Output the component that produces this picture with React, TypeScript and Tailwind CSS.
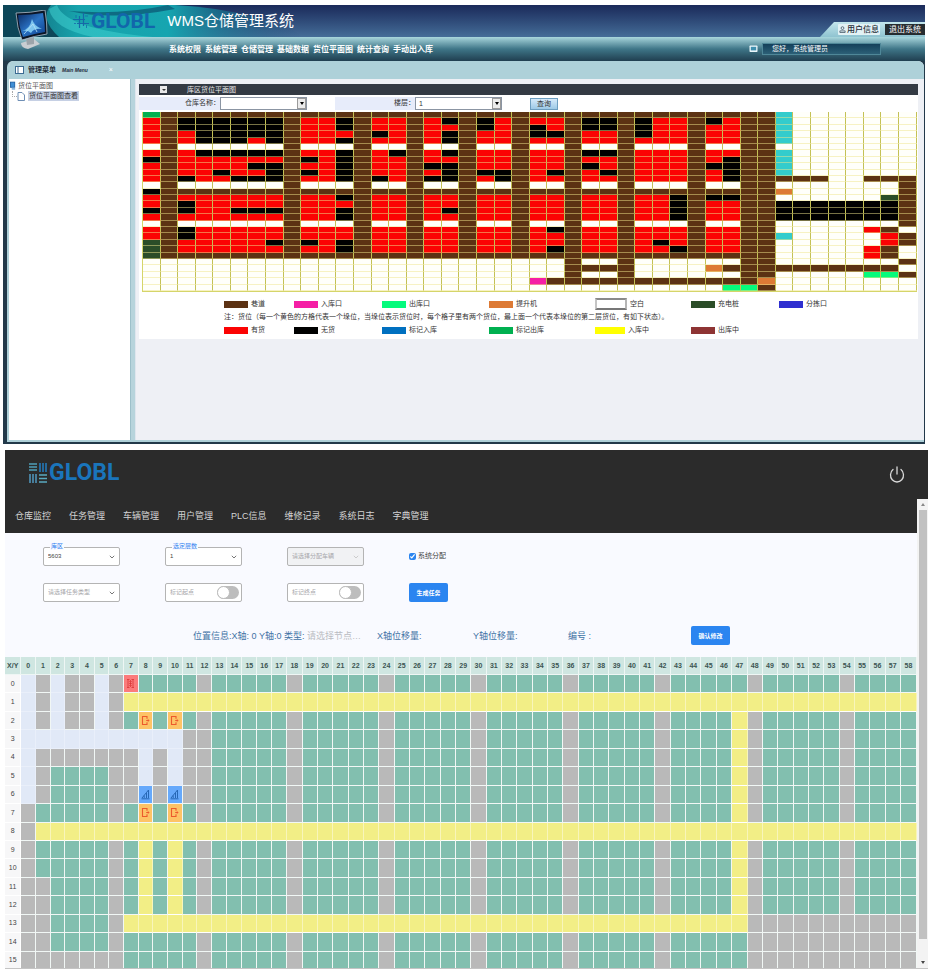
import React from "react";

const CJK = "font-['Liberation_Sans','Noto_Sans_CJK_SC',sans-serif]";

/* ---------- Storage plan: one string per column, top to bottom ---------- */

const rack = (a: string, b: string, c: string, d: string, tail = ".....") =>
  `B${a}.${b}.B${c}.${d}B${tail}`;
const aisle = (tail = ".....") => "B".repeat(23) + tail;
const R4 = "RRRR";
const R5 = "RRRRR";

const PLAN_COLUMNS: string[] = [
  "GRRRR.RKRRR.KRRKR.RRCCC.....",
  aisle(),
  rack("KKRR", "RRRRK", "RKKR", "KKRR"),
  rack("KKKK", "KRRRR", R4, R4),
  rack("KKKK", "KRRKR", R4, R4),
  rack("KKKK", "KRRRK", "RRKR", R4),
  rack("KKKR", "KRKRK", "RRKR", R4),
  rack("KKKK", "KRKKK", "RRKR", "RRKR"),
  aisle(),
  rack(R4, "RKRKR", R4, "RRKR"),
  rack(R4, R5, R4, R4),
  rack("KKRK", "KKKKK", "KRKK", "RRKK"),
  aisle(),
  rack("RRKR", "RRRRK", R4, R4),
  rack(R4, "KRRRR", R4, R4),
  aisle(),
  rack(R4, "RRKRK", R4, R4),
  rack("KRKK", "KRKKK", "RRKR", R4),
  aisle(),
  rack("KKRR", "RRRKR", R4, R4),
  rack(R4, "RRRKK", R4, R4),
  aisle(),
  rack("RKKR", R5, R4, R4, "...P."),
  rack("RRKR", "RRRKR", R4, "KRRK", "...B."),
  aisle("BBBB."),
  rack("KKRR", "KRKRR", R4, R4, ".B.B."),
  rack("KKRR", "KRRKR", R4, R4, ".B.B."),
  aisle("BBBB."),
  rack("KKKR", R5, R4, R4, "...B."),
  rack(R4, R5, R4, "RRKR", "...B."),
  rack(R4, R5, "KKKK", "RRRK", "...B."),
  aisle("...B."),
  rack("KRRR", "RRKRR", "KRRR", R4, ".O.B."),
  rack(R4, "RKKKK", "KRRR", R4, ".B.BS"),
  aisle("BBBBS"),
  aisle("BBBOB"),
  "TTTTT.TTTTB.O.KKK..T....B...",
  "..........B...KKK.......B...",
  "..........B...KKK.......B...",
  "..............KKK.......B...",
  "..............KKK.......B...",
  "..........B...KKK.R..RR.BS..",
  "..........B..CKKK.BRRBB.BS..",
  "..........BBBBBBBB.BB..B.B..",
];

const PLAN_FILL: Record<string, string> = {
  ".": "bg-[#fffffa]",
  B: "bg-[#5c3213]",
  R: "bg-[#fb0303]",
  K: "bg-black",
  G: "bg-[#00b050]",
  C: "bg-[#2b4d28]",
  T: "bg-[#33cccc]",
  O: "bg-[#dd7a35]",
  P: "bg-[#f51fa5]",
  S: "bg-[#05fb7c]",
};

function StoragePlan() {
  return (
    <table className="h-[180px] w-full table-fixed border-separate border-spacing-0 border-b border-l border-[#d5d56a]">
      <tbody>
        {Array.from({ length: 28 }, (_, r) => (
          <tr key={r}>
            {PLAN_COLUMNS.map((col, c) => (
              <td key={c} className={`border-r border-b border-r-[#c4c155] border-b-[#f0e68c80] p-0 ${PLAN_FILL[col[r]]}`} />
            ))}
          </tr>
        ))}
      </tbody>
    </table>
  );
}

const LEGEND_TYPES = [
  ["巷道", "bg-[#5c3213]"],
  ["入库口", "bg-[#f51fa5]"],
  ["出库口", "bg-[#05fb7c]"],
  ["提升机", "bg-[#dd7a35]"],
  ["空白", ""],
  ["充电桩", "bg-[#2b4d28]"],
  ["分拣口", "bg-[#2f2fd0]"],
];
const LEGEND_STATES = [
  ["有货", "bg-[#fb0303]"],
  ["无货", "bg-black"],
  ["标记入库", "bg-[#0070c0]"],
  ["标记出库", "bg-[#00b050]"],
  ["入库中", "bg-[#ffff00]"],
  ["出库中", "bg-[#8e3434]"],
];

function LegendRow({ items }: { items: string[][] }) {
  return (
    <ul className="grid h-3 grid-cols-[70fr_88fr_107fr_106fr_96fr_88fr_138fr] items-center">
      {items.map(([name, fill]) => (
        <li key={name} className="flex items-center gap-[3px] whitespace-nowrap">
          {fill ? (
            <span className={`h-[7px] ${name === "入库中" ? "w-[30px]" : "w-6"} ${fill}`} />
          ) : (
            <span className="h-3 w-8 border-2 border-t-[#8a8a8a] border-r-[#b5b5b5] border-b-[#777] border-l-[#c5c5c5] bg-white" />
          )}
          {name}
        </li>
      ))}
    </ul>
  );
}

function MonitorIcon() {
  return (
    <svg viewBox="0 0 34 40" className="absolute top-[5px] left-[11px] z-10 h-10 w-[34px]" aria-hidden="true">
      <defs>
        <linearGradient id="screen" x1="0" y1="0" x2="1" y2="1">
          <stop offset="0" stopColor="#0b2b63" />
          <stop offset="0.5" stopColor="#2a72c4" />
          <stop offset="1" stopColor="#0c3f8c" />
        </linearGradient>
      </defs>
      <path d="M7 33 L20 29 L26 34 L14 39 Q7 38 7 33Z" fill="#c9ced2" />
      <path d="M12 28 L20 27 L20 34 L13 35Z" fill="#9ca4aa" />
      <path d="M2 3 Q16 3 31 0 Q33 12 33 24 Q20 26 8 30 Q3 18 2 3Z" fill="#0b1526" stroke="#aebdca" strokeWidth="0.8" />
      <path d="M4 5 Q17 5 29 3 Q31 13 31 22 Q19 24 9 27 Q5 17 4 5Z" fill="url(#screen)" />
      <path d="M8 21 Q16 19 18 9 Q20 16 28 19 Q20 18 17 23 Q14 20 8 21Z" fill="#7cc4ee" />
      <path d="M10 24 L19 14 L23 22" stroke="#b9e3f7" strokeWidth="0.8" fill="none" />
    </svg>
  );
}

function HeaderSwoosh() {
  return (
    <svg viewBox="0 0 300 32" className="absolute top-0 left-0 h-8 w-[300px]" aria-hidden="true">
      <defs>
        <linearGradient id="teal" x1="0" x2="1">
          <stop offset="0" stopColor="#0f5b6e" />
          <stop offset="0.25" stopColor="#17a3ac" />
          <stop offset="0.55" stopColor="#16a5b0" />
          <stop offset="1" stopColor="#1c4f78" stopOpacity="0" />
        </linearGradient>
      </defs>
      <path d="M0 0 H172 Q215 2 260 14 Q288 22 300 32 H0Z" fill="url(#teal)" />
      <path d="M0 0 H48 Q36 14 56 32 H0Z" fill="#0d4658" />
      <path d="M54 0 Q62 24 150 32 H90 Q50 24 46 4Z" fill="#3fd0cf" opacity="0.55" />
      <path d="M165 0 Q120 10 66 6 Q110 16 172 4Z" fill="#0c5d78" opacity="0.8" />
    </svg>
  );
}

function CrossMark() {
  return (
    <svg viewBox="0 0 18 18" className="h-[18px] w-[18px]" stroke="#1668a8" fill="none" aria-hidden="true">
      <path d="M7.5 4V16M11.5 1V14M1 7.5H13M5 11.5H17" strokeWidth="1.2" />
      <path d="M4 3V6M14.5 13V16M2 11.5H4M13 4H16" strokeWidth="0.8" />
    </svg>
  );
}

function WeaveMark() {
  return (
    <svg viewBox="0 0 20 22" className="h-[22px] w-5" strokeWidth="1.6" fill="none" aria-hidden="true">
      <path d="M1 2H9M1 5H9M1 8H9" stroke="#4f9fb8" />
      <path d="M12 1V10M15 1V10M18 1V10" stroke="#2478b8" />
      <path d="M2 12V21M5 12V21M8 12V21" stroke="#4f93b8" />
      <path d="M11 13H19M11 16.5H19M11 20H19" stroke="#5aa9c0" />
    </svg>
  );
}

const WMS_MENU = ["系统权限", "系统管理", "仓储管理", "基础数据", "货位平面图", "统计查询", "手动出入库"];

function BoxSelect({ id, value }: { id: string; value: string }) {
  return (
    <span className="relative flex">
      <select id={id} className="block h-[13px] w-[87px] appearance-none border border-[#8b95a3] bg-white pl-[3px] text-[7px] leading-[10px] text-[#333]">
        <option>{value}</option>
      </select>
      <span className="pointer-events-none absolute inset-y-px right-px flex w-[9px] items-center justify-center border border-[#9a9a9a] bg-[#ececec]">
        <span className="border-x-[2px] border-t-[3px] border-x-transparent border-t-black" />
      </span>
    </span>
  );
}

function WmsHeader() {
  return (
    <header className="relative overflow-hidden">
      <div className="relative h-8 bg-linear-to-b from-[#1b2a5a] to-[#456d98]">
        <HeaderSwoosh />
        <div className="relative flex h-full items-center pl-[69px]">
          <CrossMark />
          <span className="ml-px font-['Roboto',sans-serif] text-[21px] leading-6 font-bold text-[#1266ab]">GLOBL</span>
          <h1 className="ml-3 text-[15px] leading-6 text-white">WMS仓储管理系统</h1>
          <div className="ml-auto flex h-[15px] items-center gap-[5px] self-end bg-linear-to-b from-[#c3e6ec] to-[#8fc3d0] pl-[18px] [clip-path:polygon(14px_0,100%_0,100%_100%,0_100%)]">
            <button className="flex h-[11px] items-center gap-px rounded-[1px] bg-[#e3f2f5] px-px text-[8px] leading-[10px] font-medium text-[#26303a]">
              <svg viewBox="0 0 8 8" className="h-[7px] w-[7px]" fill="none" stroke="#456" strokeWidth="0.9">
                <circle cx="4" cy="2.4" r="1.6" />
                <path d="M1 7.4V5.6H7V7.4Z" />
              </svg>
              用户信息
            </button>
            <button className="h-[11px] bg-[#252c30] px-[4px] text-[8px] leading-[10px] text-white">退出系统</button>
          </div>
        </div>
      </div>
      <div className="flex h-6 items-center bg-linear-to-b from-[#a9d7dd] via-[#3f7688] to-[#203f50] pr-11 pl-[166px]">
        <nav className="flex gap-1 pt-0.5 text-[8px] leading-3 font-bold whitespace-nowrap text-white">
          {WMS_MENU.map((m) => (
            <a key={m} href="#">{m}</a>
          ))}
        </nav>
        <svg viewBox="0 0 9 8" className="ml-auto h-2 w-[9px]" aria-hidden="true">
          <rect x="0.5" y="0.5" width="8" height="6.5" rx="0.8" fill="#eaf6fa" />
          <rect x="1.8" y="1.8" width="5.4" height="3.6" fill="#3f8fae" />
        </svg>
        <p className="ml-1 h-3 w-[119px] border border-[#4f8798] bg-linear-to-b from-[#14405a] to-[#2c6077] pl-[9px] text-[7px] leading-[10px] text-white">
          您好，系统管理员
        </p>
      </div>
      <MonitorIcon />
    </header>
  );
}

function WmsWindow() {
  return (
    <section className="mr-[5px] ml-[3px] bg-[#22394a] pb-0.5">
      <WmsHeader />
      <div className="mr-px ml-1 overflow-hidden rounded-t-md border-b-2 border-l-2 border-[#aed0d8] bg-[#eef0f5]">
        <div className="flex h-[18px] items-center bg-[#aed1d9] pl-1.5 text-[7px] leading-3 text-[#1f2d3a]">
          <svg viewBox="0 0 9 8" className="h-2 w-[9px]" aria-hidden="true">
            <rect x="0.5" y="0.5" width="8" height="7" fill="#fff" stroke="#3b6b93" />
            <path d="M3 0.5V7.5" stroke="#3b6b93" />
          </svg>
          <h2 className="ml-1 font-bold">管理菜单</h2>
          <span className="ml-1.5 text-[5px] font-bold italic">Main Menu</span>
          <button className="ml-[21px] text-[7px] text-white" aria-label="关闭">×</button>
        </div>
        <div className="flex min-h-[361px]">
          <aside className="w-[122px] shrink-0 border-r border-[#9dc0ca] bg-white text-[7px] leading-[10px] text-[#555]">
            <ul className="pt-0.5">
              <li className="flex items-center gap-0.5 pl-px">
                <svg viewBox="0 0 7 10" className="h-[10px] w-[6px]" aria-hidden="true">
                  <rect x="0.5" y="0.5" width="5" height="6" fill="#3f8fd6" stroke="#1d5da0" />
                  <path d="M2 7H6V9.5H2Z" fill="#8ab6dd" />
                </svg>
                <a href="#">货位平面图</a>
              </li>
              <li className="flex items-center pl-[3px]">
                <span className="mb-1 h-1.5 w-[5px] border-b border-l border-dotted border-[#aaa]" />
                <svg viewBox="0 0 8 9" className="h-[9px] w-2" fill="#fff" stroke="#6f8fb5" aria-hidden="true">
                  <path d="M1 0.5H5L7.5 3V8.5H1Z" />
                </svg>
                <a href="#" className="ml-[3px] bg-[#c6d0e4] px-px text-[#333]">货位平面图查看</a>
              </li>
            </ul>
          </aside>
          <div className="w-[5px] shrink-0 border-r border-[#dfe6ee] bg-[#b7d4dc]" />
          <main className="mr-1.5 ml-[3px] min-w-0 flex-1 pt-[5px] text-[7px] leading-[10px] text-[#333]">
            <div className="flex h-[11px] items-center bg-[#333a43] pl-[21px] text-[#e8e8e8]">
              <span className="flex h-[7px] w-[7px] items-center justify-center bg-[#e8e8e8]">
                <span className="border-x-[2px] border-t-[2px] border-x-transparent border-t-[#333]" />
              </span>
              <h3 className="ml-5">库区货位平面图</h3>
            </div>
            <form className="flex h-[17px] items-center bg-white" onSubmit={(e) => e.preventDefault()}>
              <label htmlFor="warehouse" className="h-[13px] w-[81px] bg-[#e7ecfa] pt-px text-right">仓库名称：</label>
              <BoxSelect id="warehouse" value="" />
              <label htmlFor="floor" className="ml-7 h-[13px] w-20 bg-[#e7ecfa] pt-px text-right">楼层：</label>
              <BoxSelect id="floor" value="1" />
              <button className="ml-7 h-3 w-7 border border-[#6d9ec0] bg-linear-to-b from-[#d5eafa] to-[#9dc9e6] leading-[10px]">查询</button>
            </form>
            <div className="bg-white pr-px pb-[3px] pl-[3px]">
              <StoragePlan />
              <div className="pt-1.5 pl-[82px]">
                <LegendRow items={LEGEND_TYPES} />
                <p className="my-0.5 whitespace-nowrap">
                  注：货位（每一个黄色的方格代表一个垛位，当垛位表示货位时，每个格子里有两个货位，最上面一个代表本垛位的第二层货位，有如下状态）。
                </p>
                <LegendRow items={LEGEND_STATES} />
              </div>
            </div>
          </main>
        </div>
      </div>
    </section>
  );
}

/* ---------- Warehouse control page ---------- */

const CONTROL_MENU = ["仓库监控", "任务管理", "车辆管理", "用户管理", "PLC信息", "维修记录", "系统日志", "字典管理"];

/* First twelve columns of every row; the others follow a regular pattern. */
const MAP_LEFT = [
  "LXLXXLXRGGGG",
  "LXLXXLXYYYYY",
  "LXLXXLXGOGOG",
  "LLLLLLLLLLLX",
  "LXXXXXXXLXLX",
  "LXGGGGXXLXLX",
  "LXGGGGXXUXUX",
  "XGGGGGXGOGOG",
  "XYYYYYYYYYYY",
  "XGGGGGXGYGYG",
  "XGGGGGXGYGYG",
  "XXGGGGXGYGYG",
  "XXGGGGXGYGYG",
  "XXGGGGXYYYYY",
  "XXGGGGXGGGGG",
  "XXXXXXXGGGGG",
];

function mapCell(r: number, c: number): string {
  if (c < 12) return MAP_LEFT[r][c];
  if (r === 1 || r === 8) return "Y";
  if (r >= 13 && c >= 48) return "X";
  if (r === 13) return "Y";
  if (c === 47 && r >= 2 && r <= 12) return "Y";
  return c % 6 === 0 ? "X" : "G";
}

const MAP_FILL: Record<string, string> = {
  L: "bg-[#e1e9f7]",
  X: "bg-[#b9b9b9]",
  G: "bg-[#82bfaf]",
  Y: "bg-[#f2ee86]",
  R: "bg-[#fb7b7b]",
  O: "bg-[#fdc366]",
  U: "bg-[#66a9fb]",
};

function MapIcon({ kind }: { kind: string }) {
  const box = "mx-auto block h-[11px] w-[9px]";
  if (kind === "R")
    return (
      <svg viewBox="0 0 9 11" className={box} fill="none" stroke="#d93636" strokeWidth="0.8">
        <path d="M1 1.5H3.5M5.5 1.5H8M1 9.5H3.5M5.5 9.5H8M2 1.5V9.5M7 1.5V9.5M3.2 5.5H5.8M4.5 2.5V8.5M3.3 3.7L4.5 2.5L5.7 3.7M3.3 7.3L4.5 8.5L5.7 7.3" />
      </svg>
    );
  if (kind === "O")
    return (
      <svg viewBox="0 0 9 11" className={box} fill="none" stroke="#ec5a2c" strokeWidth="1.1">
        <path d="M6 3.8V1.5H1.5V9.5H6V7.2M5.2 5.5H8" />
        <path d="M6.8 4L8.6 5.5L6.8 7Z" fill="#ec5a2c" stroke="none" />
      </svg>
    );
  if (kind === "U")
    return (
      <svg viewBox="0 0 9 11" className={box} fill="none" stroke="#2667b5" strokeWidth="1">
        <path d="M0.5 9.8H8.5M1 9L5.5 3.5V9M3.2 6.5V9M7.5 1V9M5.5 3.5L7.5 1" />
      </svg>
    );
  return null;
}

function WarehouseMap() {
  const cols = Array.from({ length: 59 }, (_, c) => c);
  return (
    <div className="h-[311px] overflow-hidden">
      <table className="h-[313px] w-full table-fixed border-separate border-spacing-0 text-center text-[7px] leading-[10px]">
        <colgroup>
          <col className="w-[1.8%]" />
          {cols.map((c) => (
            <col key={c} className={c < 12 ? "w-[1.61%]" : c < 18 ? "w-[1.64%]" : "w-[1.683%]"} />
          ))}
        </colgroup>
        <thead className="bg-[#cfe6e1] text-[#3c5552]">
          <tr className="h-[18px]">
            <th className="border-r border-b border-[#eef6f4] p-0 font-bold">X/Y</th>
            {cols.map((c) => (
              <th key={c} className="border-r border-b border-[#eef6f4] p-0 font-bold">{c}</th>
            ))}
          </tr>
        </thead>
        <tbody>
          {MAP_LEFT.map((_, r) => (
            <tr key={r} className="h-[18px]">
              <th className="border-r border-b border-white bg-[#f7f7f8] p-0 font-normal text-[#444]">{r}</th>
              {cols.map((c) => {
                const kind = mapCell(r, c);
                return (
                  <td key={c} className={`border-r border-b p-0 ${kind === "L" ? "border-[#e9effa]" : kind === "Y" ? "border-r-[#f8f5bb] border-b-white" : "border-[#f1f7f5]"} ${MAP_FILL[kind]}`}>
                    <MapIcon kind={kind} />
                  </td>
                );
              })}
            </tr>
          ))}
        </tbody>
      </table>
    </div>
  );
}

function FieldSelect({ id, label, value, muted, disabled }: { id: string; label?: string; value: string; muted?: boolean; disabled?: boolean }) {
  return (
    <div className="relative flex h-[19px] w-[77px]">
      {label && (
        <label htmlFor={id} className="absolute -top-1 left-[7px] z-10 bg-[#f9faff] px-px text-[6px] leading-[7px] whitespace-nowrap text-[#2f7ff0]">
          {label}
        </label>
      )}
      <select
        id={id}
        aria-label={label ?? value}
        disabled={disabled}
        className={`h-[19px] w-full appearance-none rounded-[2px] border border-[#b4b4b4] pl-1 text-[6px] opacity-100 ${disabled ? "bg-[#f1f2f4]" : "bg-white"} ${muted ? "text-[#a6a6aa]" : "text-[#444]"}`}
      >
        <option>{value}</option>
      </select>
      <svg viewBox="0 0 6 4" className="pointer-events-none absolute top-2 right-[5px] h-1 w-1.5" fill="none" stroke={disabled ? "#ccc" : "#777"}>
        <path d="M0.8 0.8L3 3L5.2 0.8" />
      </svg>
    </div>
  );
}

function FieldSwitch({ label }: { label: string }) {
  return (
    <label className="flex h-[19px] w-[77px] items-center justify-between rounded-[2px] border border-[#b4b4b4] bg-white pr-0.5 pl-1 text-[6px] text-[#a6a6aa]">
      {label}
      <input
        type="checkbox"
        role="switch"
        className="h-[13px] w-[22px] appearance-none rounded-full bg-[#bdbdbd] before:block before:h-[13px] before:w-[13px] before:rounded-full before:border before:border-[#bdbdbd] before:bg-white"
      />
    </label>
  );
}

const PRIMARY = "h-[19px] w-[39px] rounded-[2px] bg-[#2b85f0] text-[6px] leading-[10px] font-bold text-white";

function ControlPage() {
  return (
    <section className="mt-1.5 mr-0.5 ml-[5px] border-b border-[#c4c4c4] bg-[#2b2b2b]">
      <header className="flex h-[49px] items-center justify-between pr-[23px] pl-[23px]">
        <div className="flex items-center gap-px pb-1">
          <WeaveMark />
          <span className="font-['Roboto',sans-serif] text-[23px] leading-6 font-bold text-[#1a75bb]">GLOBL</span>
        </div>
        <button aria-label="退出">
          <svg viewBox="0 0 16 18" className="h-[18px] w-4" fill="none" stroke="#d8d8d8" strokeWidth="1.3" strokeLinecap="round">
            <path d="M8 1V8M4 3.5A6.5 7 0 1 0 12 3.5" />
          </svg>
        </button>
      </header>
      <div className="flex">
        <div className="min-w-0 flex-1 bg-[#f9faff]">
          <nav className="flex h-[34px] items-center gap-[18px] bg-[#2b2b2b] pl-[10px] text-[9px] leading-4 whitespace-nowrap text-[#d4d4d4]">
            {CONTROL_MENU.map((m) => (
              <a key={m} href="#">{m}</a>
            ))}
          </nav>
          <form onSubmit={(e) => e.preventDefault()}>
            <div className="flex flex-col gap-[17px] pt-[14px] pl-[38px]">
              <div className="flex h-[19px] items-center gap-[45px]">
                <FieldSelect id="area" label="库区" value="5603" />
                <FieldSelect id="level" label="选定层数" value="1" />
                <FieldSelect id="vehicle" value="请选择分配车辆" muted disabled />
                <label className="flex items-center gap-0.5 text-[7px] text-[#444]">
                  <input type="checkbox" defaultChecked className="m-0 h-[7px] w-[7px] accent-[#2b85f0]" />
                  系统分配
                </label>
              </div>
              <div className="flex h-[19px] items-center gap-[45px]">
                <FieldSelect id="task" value="请选择任务类型" muted />
                <FieldSwitch label="标记起点" />
                <FieldSwitch label="标记终点" />
                <button className={PRIMARY}>生成任务</button>
              </div>
            </div>
            <div className="grid grid-cols-[114px_70px_96px_95px_123px_auto] items-center justify-start pt-6 pb-3 pl-[188px] text-[9px] leading-4 whitespace-nowrap text-[#3f72a5]">
              <span>位置信息:X轴: 0 Y轴:0 类型:</span>
              <select aria-label="类型" className="w-[60px] appearance-none text-[#b9bcc2]">
                <option>请选择节点…</option>
              </select>
              <span>X轴位移量:</span>
              <span>Y轴位移量:</span>
              <span>编号 :</span>
              <button className={PRIMARY}>确认修改</button>
            </div>
          </form>
          <WarehouseMap />
        </div>
        <div className="flex w-[11px] flex-col items-center bg-[#f3f3f3]" aria-hidden="true">
          <span className="my-1 border-x-[2px] border-b-[3px] border-x-transparent border-b-[#888]" />
          <span className="mb-[22px] w-2 flex-1 bg-[#c1c1c1]" />
          <span className="mb-1 border-x-[2px] border-t-[3px] border-x-transparent border-t-[#444]" />
        </div>
      </div>
    </section>
  );
}

export default function App() {
  return (
    <div className={`bg-white pt-[5px] pb-[7px] ${CJK}`} lang="zh-CN">
      <WmsWindow />
      <ControlPage />
    </div>
  );
}
